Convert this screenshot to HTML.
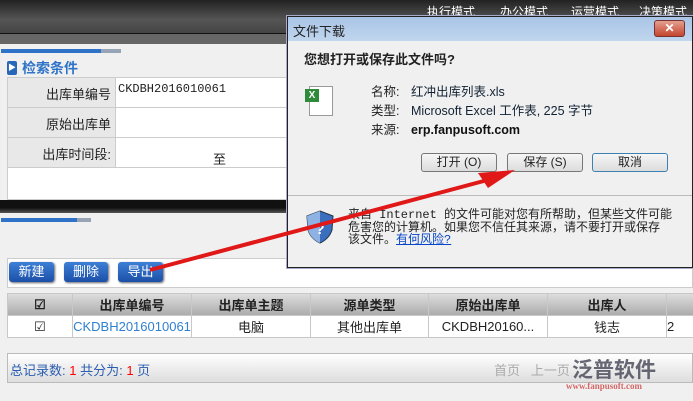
<!DOCTYPE html>
<html><head><meta charset="utf-8"><style>
*{margin:0;padding:0;box-sizing:border-box}
body{width:693px;height:401px;overflow:hidden;background:#eee;font-family:"Liberation Sans","Noto Sans CJK SC",sans-serif;font-size:12px;position:relative;color:#222}
.a{position:absolute;white-space:nowrap}
.btn{position:absolute;height:20px;border-radius:3px;background:linear-gradient(#3d7fd6,#1c4fa8);color:#fff;text-align:center;line-height:20px;font-size:13px;box-shadow:1px 1px 2px #666}
.dbtn{position:absolute;height:19px;border:1px solid #777;border-radius:3px;background:linear-gradient(#f6f6f6,#dcdcdc);text-align:center;line-height:17px;font-size:12px}
td,th{border:1px solid #c8c8c8}
</style></head><body>
<div class="a" style="left:0;top:0;width:693px;height:33px;background:linear-gradient(#222,#555 60%,#444)"></div>
<div class="a" style="left:427px;top:3px;color:#fff;font-size:12px">执行模式</div>
<div class="a" style="left:500px;top:3px;color:#fff;font-size:12px">办公模式</div>
<div class="a" style="left:571px;top:3px;color:#fff;font-size:12px">运营模式</div>
<div class="a" style="left:639px;top:3px;color:#fff;font-size:12px">决策模式</div>
<div class="a" style="left:0;top:33px;width:693px;height:11px;background:#666;border-top:1px solid #111"></div>
<div class="a" style="left:1px;top:44px;width:287px;height:156px;background:#f0f0f0"></div>
<div class="a" style="left:1px;top:49px;width:100px;height:4px;background:#2f73c8"></div>
<div class="a" style="left:101px;top:49px;width:20px;height:4px;background:#97a4b6"></div>
<div class="a" style="left:7px;top:61px;width:10px;height:14px;background:#2866b8;border-radius:2px;color:#fff;font-size:8px;line-height:14px;text-align:center">▶</div>
<div class="a" style="left:22px;top:58px;color:#2f73c8;font-weight:bold;font-size:14px">检索条件</div>
<div class="a" style="left:7px;top:77px;width:281px;height:123px;background:#fff;border:1px solid #ccc"></div>
<div class="a" style="left:8px;top:78px;width:107px;height:89px;background:#e8e8e8"></div>
<div class="a" style="left:8px;top:107px;width:280px;height:1px;background:#ccc"></div>
<div class="a" style="left:8px;top:137px;width:280px;height:1px;background:#ccc"></div>
<div class="a" style="left:8px;top:167px;width:280px;height:1px;background:#ccc"></div>
<div class="a" style="left:115px;top:78px;width:1px;height:89px;background:#ccc"></div>
<div class="a" style="left:8px;top:84px;width:103px;text-align:right;font-size:13px">出库单编号</div>
<div class="a" style="left:8px;top:114px;width:103px;text-align:right;font-size:13px">原始出库单</div>
<div class="a" style="left:8px;top:144px;width:103px;text-align:right;font-size:13px">出库时间段:</div>
<div class="a" style="left:118px;top:82px;font-family:'Liberation Mono',monospace;font-size:12px">CKDBH2016010061</div>
<div class="a" style="left:213px;top:149px;font-size:13px">至</div>
<div class="a" style="left:0;top:200px;width:693px;height:13px;background:linear-gradient(#111 60%,#555)"></div>
<div class="a" style="left:0;top:213px;width:693px;height:188px;background:#f0f0f0"></div>
<div class="a" style="left:1px;top:218px;width:76px;height:4px;background:#2f73c8"></div>
<div class="a" style="left:77px;top:218px;width:14px;height:4px;background:#97a4b6"></div>
<div class="a" style="left:7px;top:258px;width:686px;height:30px;background:#fff;border:1px solid #ccc"></div>
<div class="btn" style="left:9px;top:262px;width:45px">新建</div>
<div class="btn" style="left:64px;top:262px;width:44px">删除</div>
<div class="btn" style="left:118px;top:262px;width:45px">导出</div>
<table class="a" style="left:7px;top:293px;border-collapse:collapse;width:700px;font-size:13px;text-align:center">
<tr style="height:22px;background:linear-gradient(#ddd,#aaa);font-weight:bold;color:#222"><th style="width:65px">☑</th><th style="width:119px">出库单编号</th><th style="width:119px">出库单主题</th><th style="width:118px">源单类型</th><th style="width:119px">原始出库单</th><th style="width:119px">出库人</th><th></th></tr>
<tr style="height:22px;background:#fff"><td>☑</td><td style="color:#2f80d0">CKDBH2016010061</td><td>电脑</td><td>其他出库单</td><td>CKDBH20160...</td><td>钱志</td><td style="text-align:left">2</td></tr>
</table>
<div class="a" style="left:7px;top:353px;width:686px;height:30px;background:linear-gradient(#fff,#ddd);border:1px solid #bbb"></div>
<div class="a" style="left:10px;top:360px;color:#2a5db0;font-size:13px">总记录数: <span style="color:red">1</span> 共分为: <span style="color:red">1</span> 页</div>
<div class="a" style="left:494px;top:360px;color:#aaa;font-size:13px">首页&nbsp;&nbsp;&nbsp;上一页</div>
<div class="a" style="left:572px;top:354px;color:#445;font-size:21px;font-weight:bold;opacity:.8">泛普软件</div>
<div class="a" style="left:566px;top:381px;color:#c44;font-size:9px;font-family:'Liberation Serif',serif;font-weight:bold;opacity:.8">www.fanpusoft.com</div>
<!-- dialog -->
<div class="a" style="left:287px;top:16px;width:406px;height:252px;background:#f0f0f0;border:1px solid #222;box-shadow:0 0 0 1px #aac"></div>
<div class="a" style="left:288px;top:17px;width:404px;height:24px;background:linear-gradient(#a9c4e6,#c0d6ee)"></div>
<div class="a" style="left:293px;top:21px;font-size:13px">文件下载</div>
<div class="a" style="left:654px;top:20px;width:31px;height:17px;background:linear-gradient(#e3a090,#c4452d);border:1px solid #733;border-radius:3px;color:#fff;text-align:center;font-weight:bold;line-height:15px">✕</div>
<div class="a" style="left:304px;top:49px;font-weight:bold;font-size:13px">您想打开或保存此文件吗?</div>
<div class="a" style="left:309px;top:86px;width:24px;height:30px;background:#fff;border:1px solid #999"></div>
<div class="a" style="left:305px;top:89px;width:14px;height:13px;background:#2f8a3a;color:#fff;font-size:10px;font-weight:bold;text-align:center;line-height:13px">X</div>
<div class="a" style="left:371px;top:83px;line-height:19px;font-size:12.5px">名称:<br>类型:<br>来源:</div>
<div class="a" style="left:411px;top:83px;line-height:19px;font-size:12.5px;color:#123">红冲出库列表.xls<br>Microsoft Excel 工作表, 225 字节<br><b style="color:#111">erp.fanpusoft.com</b></div>
<div class="dbtn" style="left:421px;top:153px;width:76px">打开 (O)</div>
<div class="dbtn" style="left:507px;top:153px;width:76px">保存 (S)</div>
<div class="dbtn" style="left:592px;top:153px;width:76px;border-color:#3c7fb1">取消</div>
<div class="a" style="left:288px;top:195px;width:404px;height:1px;background:#bbb"></div>
<svg class="a" style="left:305px;top:210px" width="30" height="34" viewBox="0 0 30 34"><path d="M15 1 L28 6 L27 20 Q24 29 15 33 Q6 29 3 20 L2 6 Z" fill="#3a6fc0" stroke="#234" stroke-width="1"/><path d="M15 1 L15 33 Q6 29 3 20 L2 6Z" fill="#8fb2e4"/><text x="15" y="24" font-size="15" fill="#fff" text-anchor="middle" font-weight="bold" font-family="Liberation Sans">?</text></svg>
<div class="a" style="left:348px;top:209px;line-height:12.5px;font-size:12px;font-family:'Liberation Mono','Noto Sans CJK SC',monospace">来自 Internet 的文件可能对您有所帮助，但某些文件可能<br>危害您的计算机。如果您不信任其来源，请不要打开或保存<br>该文件。<span style="color:#0645c8;text-decoration:underline">有何风险?</span></div>
<svg class="a" style="left:0;top:0" width="693" height="401"><line x1="150" y1="270" x2="495" y2="178" stroke="#e01818" stroke-width="4"/><path d="M478 173 L515 170 L488 188 Z" fill="#e01818"/></svg>
</body></html>
